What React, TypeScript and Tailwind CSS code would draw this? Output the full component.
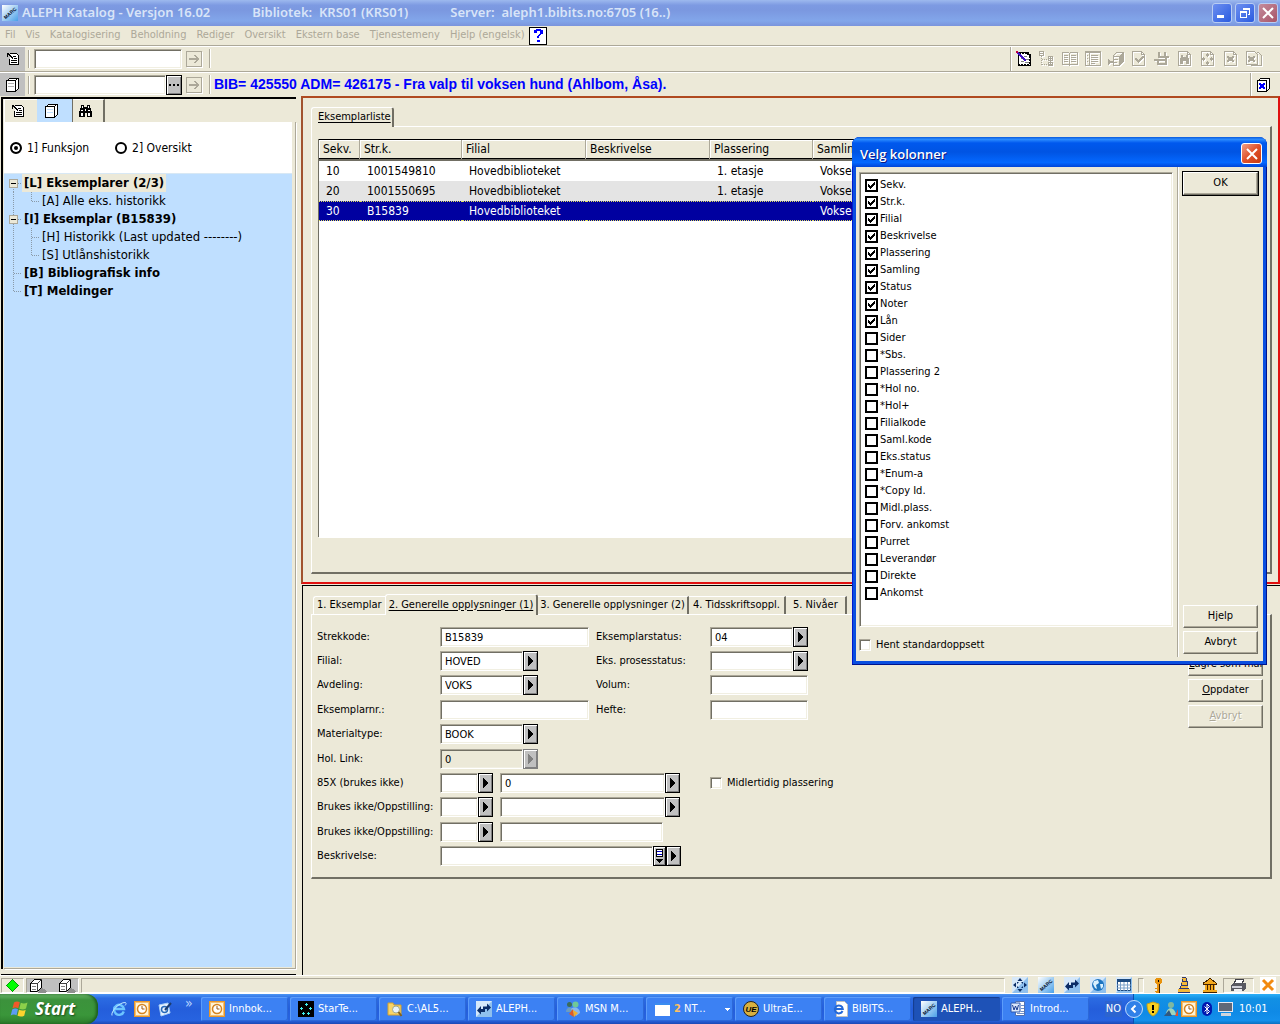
import type { ReactNode } from "react";

const FONT = "font-['DejaVu_Sans_Condensed','DejaVu_Sans',sans-serif]";
const SUNKEN =
  "border border-t-[#aca899] border-l-[#aca899] border-r-white border-b-white bg-white shadow-[inset_1px_1px_0_#716f64,inset_-1px_-1px_0_#f1efe2]";
const RAISED =
  "border border-t-white border-l-white border-r-[#716f64] border-b-[#716f64] shadow-[inset_-1px_-1px_0_#aca899]";

const menus = ["Fil", "Vis", "Katalogisering", "Beholdning", "Rediger", "Oversikt", "Ekstern base", "Tjenestemeny", "Hjelp (engelsk)"];

const columns = [
  { name: "Sekv.", checked: true },
  { name: "Str.k.", checked: true },
  { name: "Filial", checked: true },
  { name: "Beskrivelse", checked: true },
  { name: "Plassering", checked: true },
  { name: "Samling", checked: true },
  { name: "Status", checked: true },
  { name: "Noter", checked: true },
  { name: "Lån", checked: true },
  { name: "Sider", checked: false },
  { name: "*Sbs.", checked: false },
  { name: "Plassering 2", checked: false },
  { name: "*Hol no.", checked: false },
  { name: "*Hol+", checked: false },
  { name: "Filialkode", checked: false },
  { name: "Saml.kode", checked: false },
  { name: "Eks.status", checked: false },
  { name: "*Enum-a", checked: false },
  { name: "*Copy Id.", checked: false },
  { name: "Midl.plass.", checked: false },
  { name: "Forv. ankomst", checked: false },
  { name: "Purret", checked: false },
  { name: "Leverandør", checked: false },
  { name: "Direkte", checked: false },
  { name: "Ankomst", checked: false },
];

const items = [
  ["10", "1001549810", "Hovedbiblioteket", "", "1. etasje", "Voksen"],
  ["20", "1001550695", "Hovedbiblioteket", "", "1. etasje", "Voksen"],
  ["30", "B15839", "Hovedbiblioteket", "", "", "Voksen"],
];

/* ---------- icons ---------- */

function Pix({ children, className = "size-4", box = "0 0 16 16" }: { children: ReactNode; className?: string; box?: string }) {
  return (
    <svg viewBox={box} className={`shrink-0 ${className}`} shapeRendering="crispEdges" fill="none" aria-hidden="true">
      {children}
    </svg>
  );
}

function NoteIcon() {
  return (
    <Pix>
      <path d="M4.500 2.500h7l2 2v9h-9V8" fill="#fff" stroke="#000" />
      <path d="M2 2h2v1h1v1h1v1h1v1h1v2H7V7H6V6H5V5H4V4H2z" fill="#000" />
      <path d="M1.500 2.500h2M2.500 1.500v4M8 5.500h3M9 7.500h3M6 9.500h6M6 11.500h6" stroke="#000" />
    </Pix>
  );
}

function BoxIcon({ shade = "#b0b0b0" }: { shade?: string }) {
  return (
    <Pix>
      <path d="M2.500 3.500l2-2h9v10l-2 2h-9z" fill="#fff" stroke="#000" />
      <path d="M1.500 3.500h9v11h-9zM10.500 3.500l2-2M11.500 13v1" fill="#fff" stroke="#000" />
      <path d="M3 6.500h6M3 9.500h6" stroke={shade} />
    </Pix>
  );
}

function BinocularsIcon() {
  return (
    <Pix>
      <path d="M4 2h3v2h3V2h3v3h1v3h1v6h-5v-4H8v4H2V8h1V5h1z" fill="#000" />
      <path d="M5 3h1v2H5zM11 3h1v2h-1zM4 7h2v1H4zM11 7h2v1h-2zM4 10h2v3H4zM11 10h2v3h-2zM8 6h1v2H8z" fill="#fff" />
    </Pix>
  );
}

function ArrowIcon() {
  return (
    <Pix className="size-3" box="0 0 12 12">
      <path d="M1 5h7V4H7V3H6V2h2v1h1v1h1v1h1v2h-1v1H9v1H8v1H6V9h1V8h1V7H1z" fill="#aca899" />
    </Pix>
  );
}

function MarcIcon() {
  return (
    <svg viewBox="0 0 16 16" className="size-4 shrink-0" aria-hidden="true">
      <defs>
        <linearGradient id="marc" x1="0" y1="0" x2="1" y2="1">
          <stop offset="0" stopColor="#fff" />
          <stop offset="1" stopColor="#4aa0e8" />
        </linearGradient>
      </defs>
      <rect width="16" height="16" fill="url(#marc)" />
      <text x="8" y="10" fontSize="5" fontWeight="bold" fontFamily="Liberation Sans, sans-serif" textAnchor="middle" fill="#04102c" transform="rotate(-42 8 8)">
        MARC
      </text>
    </svg>
  );
}

function BlueTile({ children }: { children: ReactNode }) {
  return (
    <svg viewBox="0 0 16 16" className="size-4 shrink-0" fill="#0b2c66" aria-hidden="true">
      <rect width="16" height="16" fill="#8fc0ee" />
      <path d="M0 0h16L0 16z" fill="#d6e8fa" />
      {children}
    </svg>
  );
}

function SwapIcon() {
  return (
    <BlueTile>
      <path d="M7 5.500h4V2.500l4 4-4 4V8H7zM9 8H5V5L1 9.500l4 4V11h4z" />
    </BlueTile>
  );
}

function ClockIcon() {
  return (
    <svg viewBox="0 0 16 16" className="size-4 shrink-0" fill="none" aria-hidden="true">
      <rect x=".5" y=".5" width="15" height="15" fill="#fff3d6" stroke="#e8962a" />
      <rect x="1.500" y="1.500" width="13" height="13" stroke="#f6c070" />
      <circle cx="8" cy="8" r="4.500" fill="#fff" stroke="#d58420" strokeWidth="1.500" />
      <path d="M8 5v3h2.500" stroke="#a05a10" />
    </svg>
  );
}

function IeIcon() {
  return (
    <svg viewBox="0 0 16 16" className="size-4 shrink-0" fill="none" aria-hidden="true">
      <path d="M12.800 10.500A5 5 0 1 1 13 8H4" stroke="#6cc4ff" strokeWidth="2.400" />
      <path d="M1 14.500C-.5 11 8 1 14.500 1.500c1 .5.500 2-.5 3" stroke="#bfe6ff" />
    </svg>
  );
}

function WindowsFlag() {
  return (
    <svg viewBox="0 0 20 18" className="h-[18px] w-5 shrink-0" aria-hidden="true">
      <path d="M4 2.500C6 1 8 1.200 9.800 2.200L8.300 8.200C6.500 7.200 4.500 7.200 2.500 8.300z" fill="#f0592a" />
      <path d="M10.800 2.700C13 3.800 15 3.700 17.500 2.500L16 8.500C14 9.700 11.500 9.700 9.300 8.700z" fill="#8cd04a" />
      <path d="M2.200 9.400C4.200 8.200 6.200 8.300 8 9.300L6.500 15.300C4.700 14.300 2.700 14.400.7 15.500z" fill="#5c9cf5" />
      <path d="M9 9.800C11.200 10.800 13.500 10.900 15.700 9.700L14.200 15.700C12 16.900 9.700 16.800 7.500 15.800z" fill="#fbd32e" />
    </svg>
  );
}

const page = <path d="M1.500.5h9l3 3v11h-12zM10.500.5v3h3" stroke="#aca899" />;

const toolIcons: { label: string; art: ReactNode }[] = [
  {
    label: "Tre",
    art: (
      <>
        <path d="M.5.5h4v4h-4zM9.500 5.500h4v4h-4zM9.500 11.500h4v3h-4zM11.500 5v10M9 7.500h5M9 13h5M1 2.500h3" stroke="#aca899" />
        <path d="M2.500 5v9M3 8.500h6M3 13.500h6" stroke="#aca899" strokeDasharray="1 1" />
      </>
    ),
  },
  { label: "Bok", art: <path d="M.5 1.500h6l1 1 1-1h7v12H.5zM7.500 2v13M2 4.500h4M2 6.500h4M2 8.500h4M2 10.500h4M9 4.500h5M9 6.500h5M9 8.500h5M9 10.500h5" stroke="#aca899" /> },
  { label: "Liste", art: <path d="M.5.5h15v14H.5zM1 1.500h14M4.500 1v14M2 4.500h1M2 7.500h1M2 10.500h1M6 4.500h7M6 6.500h7M6 8.500h7M6 10.500h7M6 12.500h4" stroke="#aca899" /> },
  {
    label: "Hent",
    art: (
      <>
        <path d="M4.500 5.500l4-4h7v9l-4 4h-6V5.500h6l4-4M6 8.500h4M5 11.500h4" stroke="#aca899" />
        <path d="M11 6l5-5v9l-5 5zM0 8l3 2h3v2H3l-3 2z" fill="#aca899" />
      </>
    ),
  },
  { label: "Kontroller", art: <>{page}<path d="M4.500 7.500l3 3 5-5" stroke="#aca899" strokeWidth="2" /></> },
  { label: "Flytt", art: <path d="M5 1v5h10M11 1v6M0 9h13M4 9v5M4 13h9M12 7v7" stroke="#aca899" strokeWidth="2" /> },
  { label: "Finn", art: <>{page}<path d="M4 4h2v2h3V4h2v3h1v6H9v-3H6v3H3V7h1z" fill="#aca899" /></> },
  { label: "Utvid", art: <>{page}<path d="M7 2h1v1h1v2H8v1H7V5H6V3h1zM7 10h1v1h1v2H8v1H7v-1H6v-2h1zM3 6h1v1h1v2H4v1H3V9H2V7h1zM11 6h1v1h1v2h-1v1h-1V9h-1V7h1z" fill="#aca899" /></> },
  { label: "Lukk", art: <>{page}<path d="M4 5h2v1h3V5h2v2h-1v2h1v2H9v-1H6v1H4V9h1V7H4z" fill="#aca899" /></> },
  {
    label: "Lukk alle",
    art: (
      <>
        <path d="M.5.5h8l3 3v10H.5zM10.500 1.500h2l3 3v10h-11" stroke="#aca899" />
        <path d="M2 5h2v1h3V5h2v2H8v2h1v2H7v-1H4v1H2V9h1V7H2z" fill="#aca899" />
      </>
    ),
  },
];

/* ---------- small controls ---------- */

function Separator() {
  return <span className="mx-[3px] h-[18px] w-[2px] border-l border-r border-l-[#aca899] border-r-white" />;
}

function ListButton({ label, disabled = false }: { label: string; disabled?: boolean }) {
  return (
    <button
      type="button"
      aria-label={label}
      disabled={disabled}
      className="flex h-5 w-[15px] shrink-0 items-center justify-center border border-black bg-[#c0c0c0] shadow-[inset_1px_1px_0_#fff,inset_-1px_-1px_0_#808080] disabled:border-[#808080]"
    >
      <svg viewBox="0 0 6 10" className={disabled ? "h-[10px] w-[6px] fill-[#808080]" : "h-[10px] w-[6px] fill-black"} shapeRendering="crispEdges" aria-hidden="true">
        <path d="M0 0h1v1h1v1h1v1h1v1h1v2H4v1H3v1H2v1H1v1H0z" />
      </svg>
    </button>
  );
}

function Field({ id, label, value = "", width, disabled = false }: { id: string; label?: string; value?: string; width: string; disabled?: boolean }) {
  return (
    <input
      id={id}
      aria-label={label}
      defaultValue={value}
      disabled={disabled}
      className={`h-5 shrink-0 px-1 text-[11px] disabled:bg-[#ece9d8] ${SUNKEN} ${width}`}
    />
  );
}

function Row({ id, label, children, right }: { id: string; label: string; children: ReactNode; right?: ReactNode }) {
  return (
    <div className="flex h-6 items-center">
      <label htmlFor={id} className="w-[123px] shrink-0">
        {label}
      </label>
      <div className="flex w-[270px] shrink-0 items-center">{children}</div>
      {right}
    </div>
  );
}

function Pair({ id, label, children }: { id: string; label: string; children: ReactNode }) {
  return (
    <>
      <label htmlFor={id} className="w-[114px] shrink-0">
        {label}
      </label>
      {children}
    </>
  );
}

function PushButton({ children, strong = false, disabled = false }: { children: ReactNode; strong?: boolean; disabled?: boolean }) {
  return (
    <button
      type="button"
      disabled={disabled}
      className={`h-[23px] w-[75px] shrink-0 overflow-hidden text-[11px] whitespace-nowrap disabled:text-[#aca899] disabled:[text-shadow:1px_1px_0_#fff] ${RAISED} ${strong ? "outline outline-black" : ""}`}
    >
      {children}
    </button>
  );
}

/* ---------- window parts ---------- */

function TitleBar() {
  const box = "flex size-[20px] items-center justify-center rounded-[3px] border border-[#b9cdf3]";
  return (
    <header className="flex h-[26px] items-center bg-[linear-gradient(#9db9ee,#7d9ae2_20%,#7b98e0_40%,#82a6ea_80%,#7a94dc)] pr-[2px] pl-[2px] font-['Noto_Sans','Open_Sans',sans-serif] text-[13px] font-semibold text-[#d8e4f8]">
      <MarcIcon />
      <h1 className="ml-1 flex gap-[42px] whitespace-pre">
        <span>ALEPH Katalog - Versjon 16.02</span>
        <span>Bibliotek:  KRS01 (KRS01)</span>
        <span>Server:  aleph1.bibits.no:6705 (16..)</span>
      </h1>
      <div className="ml-auto flex gap-[3px]">
        <button type="button" aria-label="Minimer" className={`${box} bg-[linear-gradient(135deg,#6d8ff0,#2a5be0)]`}>
          <Pix className="size-3" box="0 0 12 12"><path d="M1 8h7v3H1z" fill="#fff" /></Pix>
        </button>
        <button type="button" aria-label="Gjenopprett" className={`${box} bg-[linear-gradient(135deg,#6d8ff0,#2a5be0)]`}>
          <Pix className="size-3" box="0 0 12 12"><path d="M4.500 3V1.500h6v6H9M4 2h7M1.500 4.500h6v6h-6zM1 5h7" stroke="#fff" /></Pix>
        </button>
        <button type="button" aria-label="Lukk" className={`${box} bg-[linear-gradient(135deg,#c48c9c,#a85468)]`}>
          <svg viewBox="0 0 12 12" className="size-3" aria-hidden="true"><path d="M1 1l10 10M11 1L1 11" stroke="#fff" strokeWidth="2" /></svg>
        </button>
      </div>
    </header>
  );
}

function MenuBar() {
  return (
    <nav className="flex h-[20px] items-center gap-[10px] border-b border-[#aca899] pl-[5px] text-[11px] text-[#aca899]">
      {menus.map((m) => (
        <button key={m} type="button" className="whitespace-nowrap">{m}</button>
      ))}
      <button type="button" aria-label="Hjelp" className="-ml-[6px] flex size-[18px] items-center justify-center border border-black bg-white">
        <Pix className="size-4">
          <path d="M4 2h2V1h5v1h2v4h-2v1h-1v1H9v2H7V8h1V7h1V6h1V3H7v2H4zM7 12h3v2H7z" fill="#0000ff" />
        </Pix>
      </button>
    </nav>
  );
}

function GoButton() {
  return (
    <button type="button" aria-label="Gå" disabled className="ml-1 flex size-4 items-center justify-center border border-[#aca899] shadow-[1px_1px_0_#fff]">
      <ArrowIcon />
    </button>
  );
}

function Toolbars() {
  return (
    <>
      <div className="flex h-[26px] items-center border-t border-b border-t-white border-b-[#aca899]">
        <div className="flex h-full w-[25px] items-center justify-center bg-[#c0c0c0]"><NoteIcon /></div>
        <Separator />
        <input aria-label="Post" className={`ml-px h-5 w-[148px] px-1 text-[11px] ${SUNKEN}`} />
        <GoButton />
        <span className="ml-1"><Separator /></span>
        <div className="ml-auto flex h-full items-center gap-[7px] border-l border-[#aca899] pr-[18px] pl-[5px] shadow-[inset_1px_0_0_#fff]">
          <button type="button" aria-label="Rediger">
            <Pix>
              <path d="M2.500 1.500h9l3 3v10h-12z" fill="#fff" stroke="#000" />
              <path d="M11 1h2v2h2v3h-2V4h-2zM2 12h1v3H2zM14 6h1v9h-1z" fill="#000" />
              <path d="M2 14h13M14 5v10M3 1.500h8" stroke="#000" strokeWidth="2" strokeDasharray="2 1" />
              <path d="M8 5.500h3M10 8.500h3M5 10.500h3M5 7.500h1M9 11.500h4" stroke="#808080" />
              <path d="M1 1l9 9" stroke="#4010c0" strokeWidth="2" />
              <path d="M0 0h2v2H0z" fill="#c00040" />
            </Pix>
          </button>
          {toolIcons.map((t) => (
            <button key={t.label} type="button" aria-label={t.label} disabled>
              <Pix className="size-4 drop-shadow-[1px_1px_0_#fff]">{t.art}</Pix>
            </button>
          ))}
        </div>
      </div>
      <div className="flex h-6 items-center border-t border-white">
        <div className="flex h-full w-[25px] items-center justify-center bg-[#c0c0c0]"><BoxIcon /></div>
        <Separator />
        <input aria-label="Eksemplar" className={`ml-px h-5 w-[132px] px-1 text-[11px] ${SUNKEN}`} />
        <button type="button" aria-label="Bla" className="flex h-5 w-4 items-center justify-center border border-black bg-[#c0c0c0] shadow-[inset_1px_1px_0_#fff,inset_-1px_-1px_0_#808080]">
          <Pix className="h-[2px] w-[10px]" box="0 0 10 2"><path d="M0 0h2v2H0zM4 0h2v2H4zM8 0h2v2H8z" fill="#000" /></Pix>
        </button>
        <GoButton />
        <span className="ml-1"><Separator /></span>
        <strong className="font-['Liberation_Sans',Arial,sans-serif] text-[14px] text-[#0000ff]">
          BIB= 425550 ADM= 426175 - Fra valp til voksen hund (Ahlbom, Åsa).
        </strong>
        <div className="ml-auto flex h-full items-center border-l border-[#aca899] pr-2 pl-[5px] shadow-[inset_1px_0_0_#fff]">
          <button type="button" aria-label="Lukk eksemplar">
            <Pix>
              <path d="M2.500 3.500l2-2h9v10l-2 2h-9z" fill="#fff" stroke="#000" />
              <path d="M1.500 3.500h9v11h-9z" fill="#fff" stroke="#000" />
              <path d="M3 6h2v1h2V6h2v2H8v2h1v2H7v-1H5v1H3v-2h1V8H3z" fill="#0000ff" />
            </Pix>
          </button>
        </div>
      </div>
    </>
  );
}

function TreeRow({ text, child = false, open = false, first = false, last = false, selected = false }: {
  text: string; child?: boolean; open?: boolean; first?: boolean; last?: boolean; selected?: boolean;
}) {
  return (
    <li className="flex h-[18px] items-center">
      <svg width={child ? 36 : 18} height="18" className="shrink-0" shapeRendering="crispEdges" fill="none" stroke="#8a9aa8" strokeDasharray="1 1" aria-hidden="true">
        <path d={first ? "M9.500 9v9" : !child && last ? "M9.500 0v9" : "M9.500 0v18"} />
        {!child && <path d="M10 9.500h8" />}
        {child && <path d={last ? "M27.500 0v9M28 9.500h8" : "M27.500 0v18M28 9.500h8"} />}
        {open && (
          <g strokeDasharray="none">
            <rect x="5.500" y="5.500" width="8" height="8" fill="#ece9d8" stroke="#aca899" />
            <path d="M7 9.500h5" stroke="#000" />
          </g>
        )}
      </svg>
      <span className={`px-[2px] leading-[18px] whitespace-nowrap ${child ? "" : "font-bold"} ${selected ? "bg-[#ece9d8]" : ""}`}>{text}</span>
    </li>
  );
}

function Sidebar() {
  return (
    <aside className="flex w-[298px] shrink-0 flex-col pt-px pr-[2px] pl-px">
      <div className="flex grow flex-col border-t-2 border-l-2 border-black pl-px">
        <div className="flex h-[23px] items-start" role="tablist">
          <button type="button" role="tab" aria-label="Post" className="flex h-full w-[33px] items-center justify-center border-t border-l border-white pr-[6px]">
            <NoteIcon />
          </button>
          <button type="button" role="tab" aria-selected="true" aria-label="Eksemplar" className="flex h-full w-9 items-center justify-center border-r border-[#716f64] bg-[#bfdfff] pr-[6px]">
            <BoxIcon shade="#bfdfff" />
          </button>
          <button type="button" role="tab" aria-label="Søk" className="flex h-full w-8 items-center justify-center border-t border-r-2 border-t-white border-r-[#716f64] pr-[6px]">
            <BinocularsIcon />
          </button>
        </div>
        <div className="flex grow flex-col border-r border-b border-[#aca899] pr-[3px] pb-px shadow-[1px_1px_0_#fff]">
          <div className="flex h-[51px] items-center gap-[26px] bg-white pl-[6px] text-[12px]">
            {["1] Funksjon", "2] Oversikt"].map((label, i) => (
              <label key={label} className="flex items-center gap-[5px]">
                <input
                  type="radio"
                  name="mode"
                  defaultChecked={i === 0}
                  className="size-3 appearance-none rounded-full border-2 border-black bg-white checked:bg-black checked:shadow-[inset_0_0_0_2px_#fff]"
                />
                {label}
              </label>
            ))}
          </div>
          <ul className="grow border-t border-[#d8e8f4] bg-[#bfdfff] text-[13px]">
            <TreeRow text="[L] Eksemplarer (2/3)" open first selected />
            <TreeRow text="[A] Alle eks. historikk" child last />
            <TreeRow text="[I] Eksemplar (B15839)" open />
            <TreeRow text="[H] Historikk (Last updated --------)" child />
            <TreeRow text="[S] Utlånshistorikk" child last />
            <TreeRow text="[B] Bibliografisk info" />
            <TreeRow text="[T] Meldinger" last />
          </ul>
        </div>
      </div>
      <div className="mt-[5px] h-px bg-black" />
    </aside>
  );
}

function ItemList() {
  const widths = ["w-[41px]", "w-[102px]", "w-[124px]", "w-[124px]", "w-[103px]", ""];
  const heads = ["Sekv.", "Str.k.", "Filial", "Beskrivelse", "Plassering", "Samling"];
  return (
    <section className="border-2 border-t-[#b04a20] border-r-[#e01010] border-b-[#e01010] border-l-[#a0522d] pt-[9px] pr-[6px] pb-2 pl-2">
      <div className="-mb-px flex">
        <button type="button" className="h-5 rounded-t-[3px] border-t border-r-2 border-l border-t-white border-r-[#716f64] border-l-white bg-[#ece9d8] pr-px pl-[6px] text-[11px] underline underline-offset-2">
          Eksemplarliste
        </button>
      </div>
      <div className="border-t border-r-2 border-b-2 border-l border-t-white border-r-[#716f64] border-b-[#716f64] border-l-white pt-3 pr-[6px] pb-[35px] pl-[6px]">
        <div className="h-[398px] border-l border-[#716f64] bg-white shadow-[1px_1px_0_#fff]">
          <table className="w-full table-fixed border-separate border-spacing-0 text-[12px]">
            <thead>
              <tr>
                {heads.map((h, i) => (
                  <th key={h} className={`h-[22px] border-t border-b-2 border-t-black border-b-[#716f64] bg-[#ece9d8] p-0 pl-1 text-left leading-[19px] font-normal shadow-[inset_-1px_0_0_#aca899,inset_0_-1px_0_#000,inset_1px_1px_0_#fff] ${widths[i]}`}>
                    {h}
                  </th>
                ))}
              </tr>
            </thead>
            <tbody>
              {items.map((row, r) => (
                <tr key={row[0]} className={r === 1 ? "bg-[#e4e4e4]" : r === 2 ? "bg-[#0000a0] text-white" : ""}>
                  {row.map((cell, i) => (
                    <td key={i} className={`h-5 p-0 pl-[7px] leading-[18px] ${r === 2 ? "border-t border-b border-dotted border-[#e0e060]" : ""}`}>{cell}</td>
                  ))}
                </tr>
              ))}
            </tbody>
          </table>
        </div>
      </div>
    </section>
  );
}

function ItemForm() {
  const tab = "h-[18px] border-t border-t-white whitespace-nowrap";
  return (
    <section className="mt-px ml-px grow border-t border-l border-black pt-2 pr-2 pl-2 text-[11px]">
      <div className="flex items-end pl-[2px]" role="tablist">
        <button type="button" role="tab" className={`${tab} rounded-tl-[3px] border-l border-l-white px-[3px]`}>1. Eksemplar</button>
        <button type="button" role="tab" aria-selected="true" className="-mb-px h-[21px] rounded-t-[3px] border-t border-r-2 border-l border-t-white border-r-[#716f64] border-l-white bg-[#ece9d8] px-[3px] whitespace-nowrap underline underline-offset-2">
          2. Generelle opplysninger (1)
        </button>
        <button type="button" role="tab" className={`${tab} border-r-2 border-r-[#716f64] px-[2px]`}>3. Generelle opplysninger (2)</button>
        <button type="button" role="tab" className={`${tab} border-r-2 border-r-[#716f64] px-1`}>4. Tidsskriftsoppl.</button>
        <button type="button" role="tab" className={`${tab} border-r-2 border-r-[#716f64] px-[7px]`}>5. Nivåer</button>
      </div>
      <div className="flex justify-between border-t border-r-2 border-b-2 border-l border-t-white border-r-[#716f64] border-b-[#716f64] border-l-white pt-[10px] pr-[7px] pb-[9px] pl-[5px]">
        <form className="flex flex-col gap-px">
          <div>
            <Row id="strekkode" label="Strekkode:">
              <Field id="strekkode" value="B15839" width="w-[149px]" />
              <span className="ml-[7px] flex items-center">
                <Pair id="status" label="Eksemplarstatus:">
                  <Field id="status" value="04" width="w-[83px]" />
                  <ListButton label="Velg status" />
                </Pair>
              </span>
            </Row>
            <Row id="filial" label="Filial:">
              <Field id="filial" value="HOVED" width="w-[83px]" />
              <ListButton label="Velg filial" />
              <span className="ml-[58px] flex items-center">
                <Pair id="prosess" label="Eks. prosesstatus:">
                  <Field id="prosess" width="w-[83px]" />
                  <ListButton label="Velg prosesstatus" />
                </Pair>
              </span>
            </Row>
            <Row id="avdeling" label="Avdeling:">
              <Field id="avdeling" value="VOKS" width="w-[83px]" />
              <ListButton label="Velg avdeling" />
              <span className="ml-[58px] flex items-center">
                <Pair id="volum" label="Volum:">
                  <Field id="volum" width="w-[98px]" />
                </Pair>
              </span>
            </Row>
          </div>
          <div>
            <Row id="eksnr" label="Eksemplarnr.:">
              <Field id="eksnr" width="w-[149px]" />
              <span className="ml-[7px] flex items-center">
                <Pair id="hefte" label="Hefte:">
                  <Field id="hefte" width="w-[98px]" />
                </Pair>
              </span>
            </Row>
            <Row id="material" label="Materialtype:">
              <Field id="material" value="BOOK" width="w-[83px]" />
              <ListButton label="Velg materialtype" />
            </Row>
          </div>
          <div>
            <Row id="hol" label="Hol. Link:">
              <Field id="hol" value="0" width="w-[83px]" disabled />
              <ListButton label="Velg Hol. Link" disabled />
            </Row>
            <Row
              id="x85"
              label="85X (brukes ikke)"
              right={
                <label className="flex items-center gap-[5px] whitespace-nowrap">
                  <input type="checkbox" className={`size-3 appearance-none ${SUNKEN}`} />
                  Midlertidig plassering
                </label>
              }
            >
              <Field id="x85" width="w-[38px]" />
              <ListButton label="Velg 85X" />
              <span className="w-[7px]" />
              <Field id="x85b" label="85X verdi" value="0" width="w-[165px]" />
              <ListButton label="Velg 85X verdi" />
            </Row>
            <Row id="opp1" label="Brukes ikke/Oppstilling:">
              <Field id="opp1" width="w-[38px]" />
              <ListButton label="Velg type" />
              <span className="w-[7px]" />
              <Field id="opp1b" label="Oppstilling 1" width="w-[165px]" />
              <ListButton label="Velg oppstilling" />
            </Row>
          </div>
          <div>
            <Row id="opp2" label="Brukes ikke/Oppstilling:">
              <Field id="opp2" width="w-[38px]" />
              <ListButton label="Velg type" />
              <span className="w-[7px]" />
              <Field id="opp2b" label="Oppstilling 2" width="w-[163px]" />
            </Row>
            <Row id="beskrivelse" label="Beskrivelse:">
              <Field id="beskrivelse" width="w-[213px]" />
              <button type="button" aria-label="Utvid beskrivelse" className="flex h-5 w-[13px] shrink-0 items-center justify-center border border-black bg-[#c0c0c0] shadow-[inset_1px_1px_0_#fff,inset_-1px_-1px_0_#808080]">
                <Pix className="h-[14px] w-[9px]" box="0 0 9 14">
                  <path d="M1.500.5h6v7h-6z" fill="#fff" stroke="#000" />
                  <path d="M2 2.500h5M2 5.500h5" stroke="#0000c0" />
                  <path d="M1 10h7v1H7v1H6v1H5v1H4v-1H3v-1H2v-1H1z" fill="#000" />
                </Pix>
              </button>
              <ListButton label="Velg beskrivelse" />
            </Row>
          </div>
        </form>
        <div className="flex flex-col gap-[3px] pt-7">
          <PushButton><u>L</u>agre som mal</PushButton>
          <PushButton><u>O</u>ppdater</PushButton>
          <PushButton disabled><u>A</u>vbryt</PushButton>
        </div>
      </div>
    </section>
  );
}

function ColumnDialog() {
  return (
    <div role="dialog" aria-labelledby="dialog-title" className="absolute top-[137px] right-[13px] w-[415px] rounded-t-lg bg-[#0a4fe0] px-1 pb-1 text-[11px] shadow-[inset_-1px_-1px_0_#00138c,inset_1px_0_0_#0019cf]">
      <div className="-mx-1 flex h-[30px] items-center justify-between rounded-t-lg bg-[linear-gradient(#0a5bdc,#2b8bff_8%,#0058ee_20%,#0054e3_50%,#0468ff_85%,#0045d8)] pr-[5px] pl-2">
        <h2 id="dialog-title" className="pt-[5px] font-['Open_Sans','Noto_Sans',sans-serif] text-[13px] font-semibold text-white [text-shadow:1px_1px_0_#0a1883]">
          Velg kolonner
        </h2>
        <button type="button" aria-label="Lukk dialog" className="mt-[3px] flex size-[21px] items-center justify-center rounded-[3px] border border-white bg-[linear-gradient(135deg,#f0a088,#e0512a_50%,#c83a10)]">
          <svg viewBox="0 0 12 12" className="size-3" aria-hidden="true"><path d="M1 1l10 10M11 1L1 11" stroke="#fff" strokeWidth="2" /></svg>
        </button>
      </div>
      <div className="flex bg-[#ece9d8] pr-px pb-1 pl-[3px]">
        <div className="grow pt-[5px] pb-[3px]">
          <div className={`h-[455px] pt-1 pl-[5px] ${SUNKEN}`}>
            {columns.map((c) => (
              <label key={c.name} className="flex h-[17px] items-center gap-[2px]">
                <span className="grid size-[13px]">
                  <input type="checkbox" defaultChecked={c.checked} className="peer col-start-1 row-start-1 size-[13px] appearance-none border-2 border-black bg-white" />
                  <Pix className="invisible col-start-1 row-start-1 size-[13px] peer-checked:visible" box="0 0 13 13">
                    <path d="M3 5h1v1h1v1h1V6h1V5h1V4h1V3h1v3H9v1H8v1H7v1H6v1H5V9H4V8H3z" fill="#000" />
                  </Pix>
                </span>
                {c.name}
              </label>
            ))}
          </div>
          <label className="mt-[10px] flex items-center gap-[5px]">
            <input type="checkbox" className={`size-3 appearance-none ${SUNKEN}`} />
            Hent standardoppsett
          </label>
        </div>
        <div className="ml-1 w-[2px] border-r border-l border-r-white border-l-[#aca899]" />
        <div className="flex w-[83px] flex-col items-center gap-[3px] pt-[5px] pb-[3px]">
          <PushButton strong>OK</PushButton>
          <span className="grow" />
          <PushButton>Hjelp</PushButton>
          <PushButton>Avbryt</PushButton>
        </div>
      </div>
    </div>
  );
}

function StatusBar() {
  const cell = "flex h-[15px] items-center border border-t-[#aca899] border-l-[#aca899] border-r-white border-b-white";
  return (
    <footer className="flex h-[19px] items-end border-t border-b border-white">
      <div className={`${cell} ml-px w-[23px] justify-center`}>
        <Pix className="size-[13px]" box="0 0 13 13">
          <path d="M6 0h1v1h1v1h1v1h1v1h1v1h1v1h1v1h-1v1h-1v1h-1v1H9v1H8v1H7v1H6v-1H5v-1H4v-1H3V9H2V8H1V7H0V6h1V5h1V4h1V3h1V2h1V1h1z" fill="#00a000" />
          <path d="M6 1h1v1h1v1h1v1h1v1h1v1h1v1h-1v1h-1v1H9v1H8v1H7v1H6v-1H5v-1H4V9H3V8H2V7H1V6h1V5h1V4h1V3h1V2h1z" fill="#00ff00" />
        </Pix>
      </div>
      <div className={`${cell} ml-[2px] w-[53px] justify-between bg-[#c0c0c0] pl-[2px]`}>
        {[0, 1].map((i) => (
          <Pix key={i} className="h-[14px] w-[20px]" box="0 0 20 14">
            <path d="M12 8l6 4-2 2H9z" fill="#909090" />
            <path d="M1.500 4.500l4-4h7v8l-4 4h-7z" fill="#fff" stroke="#000" />
            <path d="M1.500 4.500h7v8M8.500 4.500l4-4" stroke="#404040" />
            <path d="M3 7.500h4M3 10.500h4" stroke="#808080" />
          </Pix>
        ))}
      </div>
      <div className={`${cell} ml-[2px] grow`} />
      <div className="ml-[7px] flex h-4 items-center gap-[10px]">
        <BlueTile><path d="M8 1l2.500 3h-5zM8 15l2.500-3h-5zM1 8l3-2.500v5zM15 8l-3-2.500v5zM5 5h2L5 7zM11 5v2L9 5zM5 11V9l2 2zM11 11H9l2-2z" /></BlueTile>
        <MarcIcon />
        <SwapIcon />
        <BlueTile>
          <circle cx="8" cy="8" r="6" fill="#1c74c0" />
          <path d="M4 4l4-1 1 3-3 2 1 4-2-1-2-4zM10 7l3 0v3l-2 2z" fill="#d8f0ff" />
        </BlueTile>
        <BlueTile>
          <path d="M1.500 2.500h13v11h-13z" fill="#fff" stroke="#1c4a80" />
          <path d="M1 2h14v3H1z" fill="#1c4a80" />
          <path d="M4.500 5v9M8 5v9M11.500 5v9M1 8h14M1 11h14" stroke="#7aa0c8" />
        </BlueTile>
      </div>
      <div className={`${cell} ml-[6px] w-[6px]`} />
      <div className="ml-[6px] flex h-4 items-center gap-[10px]">
        <Pix>
          <path d="M6 1h5v1h1v4h-1v1H9v9H6v-1H5v-1h2v-2H5v-1h2V7H6V6H5V2h1z" fill="#e8920c" />
          <path d="M8 3h1v2H8z" fill="#000" />
          <path d="M9.500 7v9" stroke="#402000" />
        </Pix>
        <Pix>
          <path d="M6 1h4v4h1v4h1v3h2v4H2v-4h2V9h1V5h1z" fill="#f4b838" />
          <path d="M6 .5h4M5.500 4.500h6M4.500 8.500h7M3 11.500h10M2 15h12M10.500 1v4M11.500 5v4M6.500 2v2M5.500 6v2M4.500 9v2" stroke="#303870" />
        </Pix>
        <Pix>
          <path d="M8 1l7 5v2H1V6zM3 8h10v5h2v3H1v-3h2z" fill="#f4a81c" />
          <path d="M1 6.500l7-5 7 5M1 7.500h14M5.500 8v5M8.500 8v5M11.500 8v5M1 15.500h14" stroke="#402000" />
        </Pix>
      </div>
      <div className={`${cell} ml-[5px] w-[31px] justify-center`}>
        <Pix className="h-[15px] w-4" box="0 0 16 15">
          <path d="M5 1h8l-2 5H3z" fill="#fff" stroke="#404048" />
          <path d="M0 7l3-2h12v5l-3 3H0z" fill="#585860" />
          <path d="M1 8h10v2H1z" fill="#d0d0d8" />
          <path d="M3 11h8v3H3z" fill="#f0f0f0" />
        </Pix>
      </div>
      <button type="button" aria-label="Avslutt" className="mr-1 ml-[6px] flex size-4 items-center justify-center bg-white">
        <svg viewBox="0 0 14 14" className="size-[14px]" aria-hidden="true"><path d="M2 2l10 10M12 2L2 12" stroke="#f28a10" strokeWidth="3" /></svg>
      </button>
    </footer>
  );
}

const tasks: { text: ReactNode; icon: ReactNode; active?: boolean; more?: boolean }[] = [
  { text: "Innbok...", icon: <ClockIcon /> },
  {
    text: "StarTe...",
    icon: (
      <Pix>
        <path d="M0 0h16v16H0z" fill="#000" />
        <path d="M8.500 2v3M7 3.500h3M3.500 6v3M2 7.500h3M12.500 6v3M11 7.500h3M5.500 11v3M4 12.500h3M10.500 11v3M9 12.500h3" stroke="#40f0f0" />
      </Pix>
    ),
  },
  {
    text: "C:\\AL5...",
    icon: (
      <svg viewBox="0 0 16 16" className="size-4 shrink-0" fill="none" aria-hidden="true">
        <path d="M1 2h5l1 2h7v10H1z" fill="#f7d468" stroke="#d0a030" />
        <circle cx="9" cy="8.500" r="3.500" fill="#e8f4fc" stroke="#a0a890" />
        <path d="M11.500 11l3 4" stroke="#806020" strokeWidth="2" />
      </svg>
    ),
  },
  { text: "ALEPH...", icon: <SwapIcon /> },
  {
    text: "MSN M...",
    icon: (
      <svg viewBox="0 0 16 16" className="size-4 shrink-0" aria-hidden="true">
        <circle cx="4.500" cy="3.500" r="2.500" fill="#3c6c58" />
        <circle cx="10.500" cy="3.500" r="3" fill="#70c898" />
        <path d="M1 11c0-6 7-6 7 0z" fill="#6c9cc0" />
        <path d="M6 8c3-3 9-1 9 4l-4 3z" fill="#88b8f0" />
        <path d="M8 8l-4 5 5 3z" fill="#e05a28" />
        <path d="M8 9l5 3-4 4z" fill="#f0b030" />
      </svg>
    ),
  },
  { text: <><b className="text-[#ffc060]">2</b> NT...</>, icon: <Pix><path d="M1 3h15v12H1z" fill="#fff" /><path d="M1 2h15v2H1z" fill="#3a8cf0" /></Pix>, more: true },
  {
    text: "UltraE...",
    icon: (
      <svg viewBox="0 0 16 16" className="size-4 shrink-0" aria-hidden="true">
        <circle cx="8" cy="8" r="7.500" fill="#d8b040" stroke="#202020" />
        <text x="8" y="11" fontSize="8" fontWeight="bold" fontStyle="italic" fontFamily="Liberation Sans, sans-serif" textAnchor="middle" fill="#000">UE</text>
      </svg>
    ),
  },
  {
    text: "BIBITS...",
    icon: (
      <svg viewBox="0 0 16 16" className="size-4 shrink-0" fill="none" aria-hidden="true">
        <path d="M4.500.5h8l3 3v12h-11z" fill="#fff" stroke="#c0c0c0" />
        <path d="M10.500 10a4 4 0 1 1 .3-2H4" stroke="#2468d8" strokeWidth="2" />
      </svg>
    ),
  },
  { text: "ALEPH...", icon: <MarcIcon />, active: true },
  {
    text: "Introd...",
    icon: (
      <svg viewBox="0 0 16 16" className="size-4 shrink-0" fill="none" aria-hidden="true">
        <path d="M5.500.5h9v14h-9z" fill="#fff" stroke="#5070b0" />
        <path d="M11 4.500h3M11 7.500h3M11 10.500h3M7 12.500h7" stroke="#7090c8" />
        <path d="M1 2h9v9H1z" fill="#dce8fa" stroke="#2c58b0" />
        <path d="M2.500 4l1.500 5 1.500-4L7 9l1.500-5" stroke="#1c3c90" />
      </svg>
    ),
  },
];

function Taskbar() {
  return (
    <div className="flex h-[30px] items-stretch bg-[linear-gradient(#4b95f4,#2b6be2_14%,#245edb_50%,#2763e0_88%,#1c48b4)] text-[11px] text-white">
      <button type="button" className="flex w-[98px] shrink-0 items-center gap-[5px] rounded-r-[12px] bg-[linear-gradient(#6cb66c,#3c923c_20%,#3a963a_70%,#2c7c2c)] pl-[10px] font-['Open_Sans','Noto_Sans',sans-serif] text-[17px] font-bold italic shadow-[inset_-2px_0_3px_#1c5c1c] [text-shadow:1px_1px_2px_#1a4a1a]">
        <WindowsFlag />
        Start
      </button>
      <div className="flex w-[103px] shrink-0 items-center gap-[7px] pl-[13px]">
        <IeIcon />
        <ClockIcon />
        <svg viewBox="0 0 16 16" className="size-4 shrink-0" fill="none" aria-hidden="true">
          <path d="M2 4l9-2 2 10-9 3z" fill="#e8f2ff" stroke="#a8d0f8" />
          <circle cx="7.500" cy="8.500" r="3" stroke="#2468b8" strokeWidth="1.500" />
          <path d="M8 9l6-7" stroke="#1c3c70" strokeWidth="2" />
        </svg>
        <span className="self-start pl-[5px] text-[14px] leading-[18px] text-[#b8d4ff]">»</span>
      </div>
      <div className="flex min-w-0 grow items-center gap-[2px]">
        {tasks.map((t, i) => (
          <button
            key={i}
            type="button"
            className={`flex h-6 w-[87px] items-center gap-1 rounded-[2px] pl-2 whitespace-nowrap ${t.active ? "bg-[#1e52b7] shadow-[inset_1px_1px_1px_#143c8c]" : "bg-[#3c81f3] shadow-[inset_1px_1px_0_#5c9cfa,inset_-1px_-1px_0_#2c68d8]"}`}
          >
            {t.icon}
            <span>{t.text}</span>
            {t.more && (
              <Pix className="mr-[3px] ml-auto h-[3px] w-[5px]" box="0 0 5 3">
                <path d="M0 0h5v1H4v1H3v1H2V2H1V1H0z" fill="#fff" />
              </Pix>
            )}
          </button>
        ))}
      </div>
      <div className="flex shrink-0 items-center">
        <span className="bg-[#2c64d0] px-px">NO</span>
        <div className="ml-[11px] flex h-full w-[147px] items-center gap-[2px] border-l border-[#0c50b0] bg-[linear-gradient(#2cb0f8,#1290e4_16%,#0f8ae6_60%,#1490ec_88%,#0c70c0)]">
          <button type="button" aria-label="Vis skjulte ikoner" className="-ml-[9px] flex size-[18px] shrink-0 items-center justify-center rounded-full border border-[#c0dcff] bg-[#3080e8]">
            <svg viewBox="0 0 10 10" className="size-[10px]" fill="none" aria-hidden="true"><path d="M6.500 1.500L3 5l3.500 3.500" stroke="#fff" strokeWidth="2" /></svg>
          </button>
          <svg viewBox="0 0 16 16" className="size-4 shrink-0" aria-hidden="true">
            <path d="M8 1l6 2c0 6-2 10-6 12C4 13 2 9 2 3z" fill="#f8d020" stroke="#c0a020" />
            <path d="M7 4h2v5H7zM7 10h2v2H7z" fill="#000" />
          </svg>
          <svg viewBox="0 0 16 16" className="size-4 shrink-0" aria-hidden="true">
            <circle cx="8" cy="4" r="3" fill="#80b8a0" />
            <path d="M3 14c0-9 9-9 10 0z" fill="#a0d4bc" />
            <path d="M1 15l5-6 3 6z" fill="#305880" />
            <path d="M15 8l-3 7h3z" fill="#e05030" />
          </svg>
          <ClockIcon />
          <svg viewBox="0 0 16 16" className="size-4 shrink-0" fill="none" aria-hidden="true">
            <rect x="3" y="1" width="10" height="14" rx="5" fill="#0018b0" />
            <path d="M5.500 5.500l5 5L8 13V3l2.500 2.500-5 5" stroke="#fff" />
          </svg>
          <Pix>
            <path d="M1.500 1.500h14v9h-14z" fill="#606878" stroke="#e8e8f0" />
            <path d="M4 12h10v3H4z" fill="#d0d4dc" />
          </Pix>
          <time className="ml-1">10:01</time>
        </div>
      </div>
    </div>
  );
}

export default function App() {
  return (
    <div className={`relative flex min-h-screen flex-col bg-[#ece9d8] text-black ${FONT}`}>
      <TitleBar />
      <MenuBar />
      <Toolbars />
      <main className="flex grow">
        <Sidebar />
        <div className="flex min-w-0 grow flex-col pl-[3px]">
          <ItemList />
          <ItemForm />
        </div>
      </main>
      <StatusBar />
      <Taskbar />
      <ColumnDialog />
    </div>
  );
}
